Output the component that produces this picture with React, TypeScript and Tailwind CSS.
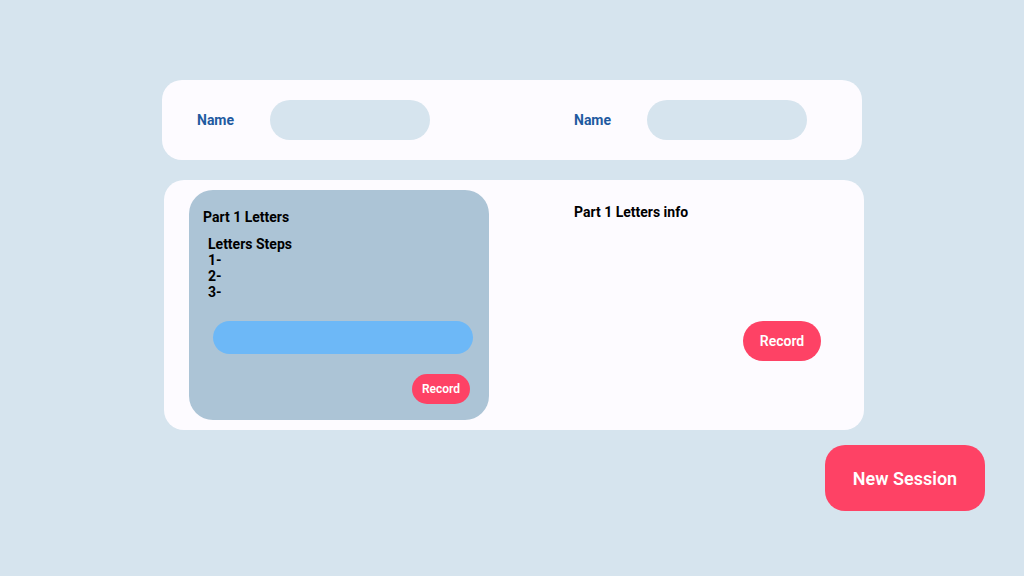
import React from 'react';

function NameField({ className = '' }: { className?: string }) {
  return (
    <div className={`flex items-center shrink-0 pl-[35px] ${className}`}>
      <span className="w-[73px] text-[14px] font-bold text-[#1f5aa0]">Name</span>
      <div className="w-[160px] h-[40px] rounded-full bg-[#d6e4ee]" />
    </div>
  );
}

export default function App() {
  return (
    <div className="w-[1024px] h-[576px] bg-[#d6e4ee] overflow-hidden font-['Roboto',sans-serif] text-black">
      <div className="pt-[80px] pl-[162px]">
        {/* Names */}
        <div className="w-[700px] h-[80px] rounded-[20px] bg-[#fdfbff] flex items-center">
          <NameField className="w-[377px]" />
          <NameField />
        </div>

        {/* Part 1 */}
        <div className="ml-[2px] mt-[20px] w-[700px] h-[250px] rounded-[20px] bg-[#fdfbff] flex pt-[10px] pl-[25px]">
          <div className="w-[300px] h-[230px] rounded-[24px] bg-[#acc4d6] flex flex-col pt-[19px] pl-[14px] pr-[19px]">
            <h3 className="text-[14px] font-bold leading-[17px]">Part 1 Letters</h3>
            <div className="mt-[10px] ml-[5px] text-[14px] font-bold leading-[16px]">
              <div>Letters Steps</div>
              <div>1-</div>
              <div>2-</div>
              <div>3-</div>
            </div>
            <div className="mt-[21px] ml-[10px] w-[260px] h-[33px] rounded-full bg-[#6db8f7]" />
            <div className="flex justify-end mt-[20px]">
              <button className="w-[58px] h-[30px] rounded-full bg-[#fe4265] text-white text-[12px] font-semibold">
                Record
              </button>
            </div>
          </div>
          <div className="ml-[85px] w-[247px] flex flex-col">
            <h3 className="mt-[14px] text-[14px] font-bold leading-[17px]">Part 1 Letters info</h3>
            <div className="flex justify-end mt-[100px]">
              <button className="w-[78px] h-[40px] rounded-full bg-[#fe4265] text-white text-[14px] font-semibold">
                Record
              </button>
            </div>
          </div>
        </div>

        {/* New session */}
        <div className="ml-[663px] mt-[15px]">
          <button className="w-[160px] h-[66px] rounded-[20px] bg-[#fe4265] text-white text-[18px] font-semibold">
            New Session
          </button>
        </div>
      </div>
    </div>
  );
}
